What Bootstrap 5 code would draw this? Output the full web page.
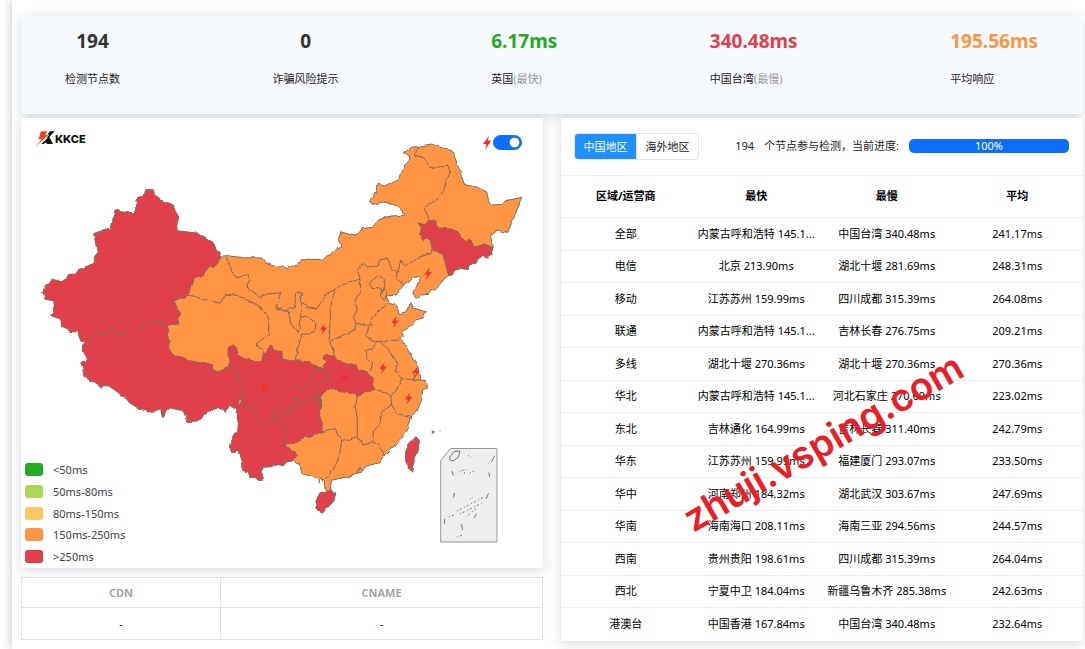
<!DOCTYPE html>
<html lang="zh-CN">
<head>
<meta charset="utf-8">
<meta name="viewport" content="width=device-width, initial-scale=1">
<title>KKCE</title>
<link href="https://cdn.jsdelivr.net/npm/bootstrap@5.3.0/dist/css/bootstrap.min.css" rel="stylesheet">
<style>
body{font-family:"Noto Sans","Noto Sans CJK SC",sans-serif;font-size:11px;line-height:16px;color:#222;background:#fff}
.page-shell{margin-left:12px;min-height:100vh;padding:16px 2px 8px 9px;box-shadow:0 0 10px rgba(0,0,0,.25);background:#fff}
.panel{background:#fff;box-shadow:0 3px 12px rgba(60,80,95,.2)}
.stats{background:#f6fafd;height:98px;padding:10px 45px 0 44px;margin-bottom:4px}
.stat-value{font-size:19px;line-height:30px;font-weight:700;color:#333}
.stat-label{margin-top:15px}
.stat-value.c-green{color:#22ac22}.stat-value.c-red{color:#e1404b}.stat-value.c-orange{color:#ff9544}.c-dim{color:#999}
.main-row{gap:18px}
.main-col{flex:1 1 0;min-width:0}
.map-svg{display:block;width:100%}
.logo{left:14px;top:12px;font:800 11px/18px Inter,sans-serif;color:#111}
.map-tools{right:21px;top:12px}
.form-switch .map-switch{width:29px;height:15px;margin:0;float:none;cursor:pointer}
.form-switch .map-switch:focus{box-shadow:none}
.legend{left:4px;bottom:4px;height:102px;color:#444}
.legend li{line-height:15px;gap:10px}
.swatch{width:18px;height:13px;border-radius:3px}
.cdn{margin:9px 0 0;table-layout:fixed;border-color:#dfe2e8;text-align:center}
.cdn th,.cdn td{padding:0;vertical-align:middle;border:1px solid #dfe2e8}
.cdn th{height:30px;color:#a4a6aa;font-weight:700}
.cdn td{height:32px;color:#222}
.cdn th:first-child{width:199px}
.tools{height:57px;padding:0 14px 0 13px;line-height:14px}
.tools .btn{font-size:11px;line-height:16px;width:63px;height:27px;padding:0;border:1px solid #e2e4e8;border-radius:4px;color:#222;background:#fff}
.tools .btn.active{background:#1e90ff;color:#fff;border-color:#e2e4e8}
.status{gap:10px;line-height:14px;padding-bottom:2px}
.tools .progress{width:160px;height:14px;border-radius:5px;font-size:11px}
.tools .progress-bar{background:#0d6efd}
.results{margin:0;table-layout:fixed;text-align:center;color:#000;border-color:#eceef0}
.results th,.results td{padding:0 6px 1px 5px;vertical-align:middle;border:0;border-top:1px solid #eceef0;white-space:nowrap;overflow:hidden;text-overflow:ellipsis;height:32px;background:transparent;color:#000}
.results thead th{height:42px;font-weight:700}
.results tbody tr:nth-child(odd) td{height:33px}
.watermark{left:104px;top:302px;transform:rotate(-30deg);font:600 38px/44px Inter,sans-serif;color:#ee1c25;white-space:nowrap;pointer-events:none}
</style>
</head>
<body>
<main class="page-shell">
  <section class="panel stats d-flex justify-content-between">
    <div class="text-center"><div class="stat-value">194</div><div class="stat-label">检测节点数</div></div>
    <div class="text-center"><div class="stat-value">0</div><div class="stat-label">诈骗风险提示</div></div>
    <div><div class="stat-value c-green">6.17ms</div><div class="stat-label">英国<span class="c-dim">(最快)</span></div></div>
    <div><div class="stat-value c-red">340.48ms</div><div class="stat-label">中国台湾<span class="c-dim">(最慢)</span></div></div>
    <div><div class="stat-value c-orange">195.56ms</div><div class="stat-label">平均响应</div></div>
  </section>

  <div class="main-row d-flex align-items-start">
    <div class="main-col">
      <section class="panel position-relative">
        <svg class="map-svg" viewBox="21 118 522 450" role="img" aria-label="中国地区">
          <defs>
            <filter id="coast" x="-2%" y="-2%" width="104%" height="104%"><feTurbulence type="fractalNoise" baseFrequency=".16" numOctaves="1" seed="4"/><feDisplacementMap in="SourceGraphic" scale="4" xChannelSelector="R" yChannelSelector="G"/></filter>
            <path id="bolt" d="M1.5-6-3.5 1H-.5L-2 6 3.500-1.500H.5z"/>
          </defs>
          <g filter="url(#coast)" stroke="#806a5c" stroke-width="1" stroke-linejoin="round">
            <path fill="#ff9544" d="M220.700 256L227.300 255.700 243.300 257.700 261.700 258 265 262 276.700 266 283.300 265.700 287.300 268.700 296.700 263.700 306 259.300H321.700L329.300 256 334 250.300 342 246.700 338.300 239.300 341 232 355 235.700 359.300 233.300 362 228.700 372.700 227.300 378.300 220 390 216 404 215.300 401.700 210 391.700 203.300 384 202 376.700 203.300 372.700 204.700 369.300 201 372.700 198.300 378.300 183.300 386.700 185.300 398.300 180 400 175 405 165 410 160 409.300 156 404.300 152.700 411.700 147.300 431.700 144 440 147.300 448.300 148.700 453.300 153.300 458.300 166.700 464 183.300 476.700 186.700 487.700 193.300 488.300 200 491.700 205 501.700 204.300 505 201 521.700 197.300 518.300 207.300 515 213.300 511.700 223.300 506.700 232.300 496.700 230 490.700 235 492.300 248.300 448.300 275.300 443.300 280 436.700 288.300 429.300 290 428.300 294.300 421.700 295 415 298.300 412.700 295 414.300 288.300 420 281.700 418.300 277.300 413.300 277.300 408.300 282.700 403.300 285.300 396 295 387.300 296 388.300 301.700 395 304.300 399.300 314 406.700 311.700 411 301.700 413.300 308.300 425.700 311.700 424 317.300 416.700 320 411.700 326 401.700 331.700 403.300 336.700 399 338.300 406.700 346.700 413.300 360 418.300 368.300 420 380 426.700 380.700 427.300 387.300 422.700 390 421.700 400 416.700 411.700 411.700 416.700 408.300 428.300 403.300 437.300 395 445 383.300 456.700 380 462.700 366.700 466 360 471.700 348.300 476.700 331.700 480 330.700 485 331 491.700 325.300 491 324 480 321 477 320 483 319 478 311.700 476.700 301.700 473.300 300 464 292.700 460 285 444 295 400 240 395 190 380 150 340 167 325 173 301 189 295 194 278.700 218 262z"/>
            <path fill="#e1404b" d="M145.700 189.700 153.700 189.300 154.300 195 160 200 166.700 202 173.300 205 175.300 210 178.700 216.700 176.700 226 177.300 230.700 198.700 233.300 208.300 239.300 212.700 240.300 216 249.300 220.700 256 218 259.300 218.700 263.300 213.300 267.300 210 266.700 201.700 276.700 194 278.700 189 294.700 172.700 301 175.300 304.700 180.700 314 176.700 320 178.700 325.300 171.700 324 166.700 325.700 158.300 321.700 148.300 322.300 141.700 324.700 139.300 329 135 329.300 126 332.700 118.300 332.300 112.300 329 107.300 334.300 96 332.300 90.700 341.700 85.300 343.300 80.700 340.700 77.300 332 71.700 331.700 61.700 327.300 61 320 50.700 315 54 313.300 52.700 300.700 45 299.300 42.700 292 45 285.700 53.300 279.300 57.300 280.700 58.300 278.700 60 281.700 65 280.700 68.700 274.300 75.300 274.300 79.300 269.300 94.300 263.300V256.700L98.300 252 95.300 236.700 92.300 234 106.700 229 111 230.300 110.300 226 116.300 209.700 120 211.700 133.300 212.700 136.700 209.300 136 200 138.700 197.300 144 196z"/>
            <path fill="#e1404b" d="M85.300 343.300 82.700 345.700 82.300 350 86 358.300 86.700 362.700 83.300 361 80.300 363.300 82.700 368.300 84 376.700 96 384 102 388.300 104 385.700 108.700 386 119.300 393.300 121.700 397.300 126 398.300 130 403.300 139.300 408.700 148.300 412 160.700 410 163 417.700 166.700 409.300 170.700 408 178.700 410 182.700 410.300 183.300 414.700 186.300 415.300 187.300 421.700 200 420.700 204 414.300 215 408 219.300 407.700 226 412.300 229.300 405.300 234.300 408.300 239 407 239 400 241.700 400 240.700 385 238.300 378.300 236 368.300 229 362 228.300 366.700 225 367.700 224 370 218.300 371.700 213.300 370 211.700 365 206.700 362.700 200 362.700 190 360.700 181.700 357 174.300 355.700 168.700 348.300 169.300 340 167.300 335 168.700 330 166.700 325.700 158.300 321.700 148.300 322.300 141.700 324.700 139.300 329 135 329.300 126 332.700 118.300 332.300 112.300 329 107.300 334.300 96 332.300 90.700 341.700z"/>
            <path fill="#e1404b" d="M229 362 228 354.300 228.300 347.300 233.300 345 236.700 347.700 237.300 354.300 240 355 246 360.700 250 359.300 255 361.700 261.700 360 263.300 354.300 267.300 350 270 344.700 272.700 346.700 273.300 350 281.700 351.700 282.700 359.300 291.700 360.700 310 361.700 315 366.700 311.700 378.300 307.300 383.300 307 387 300 389.300 295 385 291.300 389.300 291.700 395 296.700 397.700 298.700 404 292.700 408.300 289.300 411.700 286 408.300 281.700 402.700 276.700 407.300 273.300 415 271.700 425 264.300 429 258.300 419.300 253.300 408.300 245 408 241.700 400 240.700 385 238.300 378.300 236 368.300z"/>
            <path fill="#e1404b" d="M238.300 406 236 413.300 238.300 423.300 237.700 431.700 233.300 436 230.700 445V452.700L238.300 450 240 458.300 242.700 461.700V470.700L248.300 471.700 250 477.700 257.300 476.700 259.300 480.700 263.300 480 261.700 471.700 263.300 467.300 271.700 466.700 275 464 283.300 465.700 286.700 461.700 292.700 461 297.300 455 291.700 450.700 285 444 283.300 438.300 285 433.300 283.300 425 278.300 423.300 277.300 417.300 283.300 415 291.700 416 289.300 411.700 286 408.300 281.700 402.700 276.700 407.300 273.300 415 271.700 425 264.300 429 258.300 419.300 253.300 408.300 245 408 241.700 400z"/>
            <path fill="#e1404b" d="M289.300 411.700 300 404 307.300 398.300 313.300 400 316.700 396.700 318.300 403.300 321 407.300 319 416.700 322.300 423.300 321.700 431.700 310 437.300 305 436 295 443.300 285 444 283.300 438.300 285 433.300 283.300 425 278.300 423.300 277.300 417.300 283.300 415 291.700 416z"/>
            <path fill="#e1404b" d="M315 366.700 320 368.300 324 371.700 328.300 376.700 326.700 380.700 315 385 315.700 391.700 320 397.700 321 407.300 318.300 403.300 316.700 396.700 313.300 400 307.300 398.300 298.700 404 296.700 397.700 291.700 395 291.300 389.300 295 385 300 389.300 307 387 307.300 383.300 311.700 378.300z"/>
            <path fill="#e1404b" d="M315 366.700 324 368.300 326.700 361.700 322.700 357.300 325 355 334 356 340 361.700 348.300 364H356L358.300 369.300 365 371 371.700 377.300 373.300 383.300 374.300 390 365 391.700 357.300 397.700 355 393.300 345 392.700 333.300 388.300 323.300 392.700 320 397.700 315.700 391.700 315 385 326.700 380.700 328.300 376.700 324 371.700z"/>
            <path fill="#e1404b" d="M418.300 222.700 425 225 428.300 220.700H435.700L436.700 226.700 448.300 228 458.300 231.700 460 236.700 466 241.700 470 238.300 474 247.300 485 244 492.300 248.300 492.700 254 488 256 486.700 259.300 482.700 255 475 264 468.300 265V270.700L458.300 267.300 451.700 275.300H448.300L443.300 255 431.700 248.300 430.700 241.700 427 239 422.700 240.700 420.700 233.300 421 228z"/>
            <path fill="#e1404b" d="M320 492.700 330 491 336 492.700 331.700 503.300 323.300 512.300 315.700 509.300 316 500zM416.700 437.300 419.300 440.700 419 448.300 413.300 463.300 411.700 472.300 405.700 461.700V451.700L410 441.700z"/>
            <g fill="none">
              <path d="M418.300 146.700 415 155 425 158.300 429.300 167.300 443.300 166.700 447.300 165 451 171.700 446 180 444 190 438.300 198.300 423.300 208.300 428.300 215V220.700M431.700 249V253.300L418.300 257.300 405 266.700 400.700 260 398.300 271.700 396 277 403.300 285.300M398.300 271.700 392.700 270.700 387.300 258.300 380 260 378 265 366.700 267.300 362.300 263.300 357.700 270 360 279.300 343.300 283.300 335 290 326.700 292.700 316.700 309.300 306.700 305 300 301.700 301.700 292.700 296.700 293.300 294.300 307.300 283.300 311 276 306.700 281 292.700 263.300 294.300 261.700 298.300 245.700 286 250 280 248.300 274.300 236 278.300 230 266.700 227.300 255.700"/>
              <path d="M360 279.300 361 291.700 355 301 357.300 310 353.300 317 356 323.300 355 330 343.300 335 330 341.700M189 294.700 200 298.300 220 303.300 225.700 294 240 295.700 260 306.700 269 319 268.300 335 256 344 263.300 350V354.300M277 306V309.300L288.300 311.700 290.700 323.300 298.300 333.300 300 318.300 306 316 316 322.700 315 331.700 301.700 335 298.300 346.700 295 361M301.700 303V318M306 307.300 317 309M335 290 330.700 306.700 329.300 340 335 356M356 323.300 368.300 326 371.700 318.300 386.700 303.300M371.700 324 365 336 376.700 341.700 388.300 340.700 399 340M376.700 341.700 373.300 348.300 366.700 350V358.300L371.700 363.300 369.300 372M380 342.700 391.700 351.700 393.300 360 398.300 363.300 395 371.700 401.700 378.300 413.300 380 414 370 418 368M413.300 380H420"/>
              <path d="M401.700 378.300 396.700 390 390.700 396 385 391.700 374 390M390.700 396 391.700 405 398.300 415 411 417M391.700 405 381.700 411.700 380 423.300 373.300 431.700 372.700 442.700 363.300 445 357.300 436.700V416.700L355 406.700 357.300 397M372.700 442.700 378.300 443.300 384 457M322 431.700 335 428.300 341.700 441.700 357.300 436.700M341.700 441.700 338.300 460 330 473.300 325 479M378.300 275 369.300 283.300 371.700 288.300 383.300 289.300 385 283.300 382.700 278.300zM384 286 386.700 293.300 385 300 380 296.700 382 289M357 470 361 468 361 472 357 473zM320 392V407"/>
            </g>
          </g>
          <g fill="#777"><circle cx="433" cy="432" r="1.500"/><circle cx="440" cy="431" r=".6"/></g>
          <path d="M440.700 460.500 450.500 448.500H497V542H440.700z" fill="#eee" stroke="#999"/>
          <g fill="none" stroke="#777"><path d="M449.500 457.500 454 451.500 460 451 458.500 457 453 461 450 460zM494.500 456 491.500 462M489 472.500 489.500 477M451.500 471 453.500 475.500M454.500 493 453.500 497.500M488.500 493.500 486 499M444.500 519V524M476.500 514 474 518M461.500 524 462.500 530"/><path stroke-dasharray="1 2 2 3" d="M459 472 466 469 464 474M470 473 474 471M449 517 456 514M457 511 484 497M460 514 482 503M470 499 473 497M466 517 477 508M468 455 471 457M457 537 463 535"/></g>
          <g fill="#ff2a2a"><use href="#bolt" x="428" y="273.500"/><use href="#bolt" x="323.500" y="329"/><use href="#bolt" x="395" y="322"/><use href="#bolt" x="383" y="368"/><use href="#bolt" x="416.500" y="372"/><use href="#bolt" x="408.500" y="398.500"/><use href="#bolt" x="344" y="377"/><use href="#bolt" x="263.500" y="387"/></g>
        </svg>
        <a href="#" class="logo position-absolute d-flex text-decoration-none" aria-label="KKCE">
          <svg width="20" height="18" viewBox="0 0 60 54" aria-hidden="true"><path fill="#111" d="M38 12 45 4H59L43 21 54 42H37L32 37 26 42H19L37 25z"/><path fill="#f04020" stroke="#fff" stroke-width="1.500" d="M17 3H38L32 14H42L0 52 19 28H10z"/></svg>
          <span>KKCE</span>
        </a>
        <div class="map-tools position-absolute d-flex align-items-center form-check form-switch p-0 m-0">
          <svg width="12" height="15" viewBox="-6 -7 12 15" aria-hidden="true"><path fill="#ff2030" d="M2-6-4 2H-.5L-2 8 4-1.500H.5z"/></svg>
          <input class="form-check-input map-switch" type="checkbox" role="switch" checked aria-label="节点">
        </div>
        <ul class="legend list-unstyled m-0 position-absolute d-flex flex-column justify-content-between">
          <li class="d-flex align-items-center"><span class="swatch" style="background:#22ac22"></span>&lt;50ms</li>
          <li class="d-flex align-items-center"><span class="swatch" style="background:#add556"></span>50ms-80ms</li>
          <li class="d-flex align-items-center"><span class="swatch" style="background:#f9c764"></span>80ms-150ms</li>
          <li class="d-flex align-items-center"><span class="swatch" style="background:#ff9544"></span>150ms-250ms</li>
          <li class="d-flex align-items-center"><span class="swatch" style="background:#e1404b"></span>&gt;250ms</li>
        </ul>
      </section>
      <table class="cdn table">
        <thead><tr><th>CDN</th><th>CNAME</th></tr></thead>
        <tbody><tr><td>-</td><td>-</td></tr></tbody>
      </table>
    </div>

    <section class="main-col panel position-relative">
      <div class="tools d-flex align-items-center justify-content-between">
        <div class="btn-group" role="group">
          <button type="button" class="btn active">中国地区</button>
          <button type="button" class="btn">海外地区</button>
        </div>
        <div class="status d-flex align-items-center">
          <span>194</span><span>个节点参与检测，当前进度:</span>
          <div class="progress" role="progressbar" aria-valuenow="100" aria-valuemin="0" aria-valuemax="100"><div class="progress-bar" style="width:100%">100%</div></div>
        </div>
      </div>
      <table class="results table">
        <thead><tr><th>区域/运营商</th><th>最快</th><th>最慢</th><th>平均</th></tr></thead>
        <tbody>
          <tr><td>全部</td><td>内蒙古呼和浩特 145.1...</td><td>中国台湾 340.48ms</td><td>241.17ms</td></tr>
          <tr><td>电信</td><td>北京 213.90ms</td><td>湖北十堰 281.69ms</td><td>248.31ms</td></tr>
          <tr><td>移动</td><td>江苏苏州 159.99ms</td><td>四川成都 315.39ms</td><td>264.08ms</td></tr>
          <tr><td>联通</td><td>内蒙古呼和浩特 145.1...</td><td>吉林长春 276.75ms</td><td>209.21ms</td></tr>
          <tr><td>多线</td><td>湖北十堰 270.36ms</td><td>湖北十堰 270.36ms</td><td>270.36ms</td></tr>
          <tr><td>华北</td><td>内蒙古呼和浩特 145.1...</td><td>河北石家庄 270.69ms</td><td>223.02ms</td></tr>
          <tr><td>东北</td><td>吉林通化 164.99ms</td><td>吉林长春 311.40ms</td><td>242.79ms</td></tr>
          <tr><td>华东</td><td>江苏苏州 159.99ms</td><td>福建厦门 293.07ms</td><td>233.50ms</td></tr>
          <tr><td>华中</td><td>河南郑州 184.32ms</td><td>湖北武汉 303.67ms</td><td>247.69ms</td></tr>
          <tr><td>华南</td><td>海南海口 208.11ms</td><td>海南三亚 294.56ms</td><td>244.57ms</td></tr>
          <tr><td>西南</td><td>贵州贵阳 198.61ms</td><td>四川成都 315.39ms</td><td>264.04ms</td></tr>
          <tr><td>西北</td><td>宁夏中卫 184.04ms</td><td>新疆乌鲁木齐 285.38ms</td><td>242.63ms</td></tr>
          <tr><td>港澳台</td><td>中国香港 167.84ms</td><td>中国台湾 340.48ms</td><td>232.64ms</td></tr>
        </tbody>
      </table>
      <div class="watermark position-absolute">zhuji.vsping.com</div>
    </section>
  </div>
</main>
<script src="https://cdn.jsdelivr.net/npm/bootstrap@5.3.0/dist/js/bootstrap.bundle.min.js"></script>
</body>
</html>
